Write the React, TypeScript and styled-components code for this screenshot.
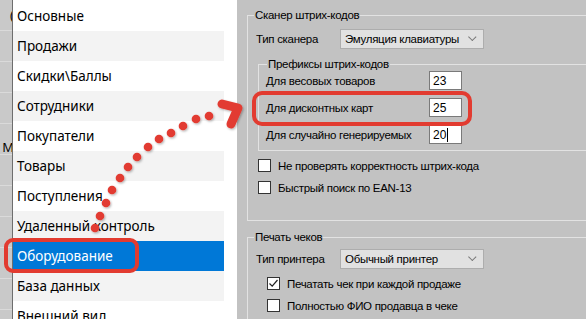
import styled, { createGlobalStyle } from "styled-components";

const GlobalStyle = createGlobalStyle`
  html, body {
    margin: 0;
    padding: 0;
    background: #ffffff;
  }
`;

const menuItems = [
  "Основные",
  "Продажи",
  "Скидки\\Баллы",
  "Сотрудники",
  "Покупатели",
  "Товары",
  "Поступления",
  "Удаленный контроль",
  "Оборудование",
  "База данных",
  "Внешний вид",
];

const stripCells = ["(", "", "", "", "M", "", "", "", "", "", ""];

const prefixes = [
  { label: "Для весовых товаров", value: "23" },
  { label: "Для дисконтных карт", value: "25" },
  { label: "Для случайно генерируемых", value: "20", caret: true },
];

const dots = [
  [95, 228], [100, 216], [106, 203], [112, 190], [120, 178], [128, 167],
  [137, 157], [148, 147], [159, 139], [171, 133], [183, 126], [196, 119], [209, 116],
];

export default function App() {
  return (
    <>
      <GlobalStyle />
      <Screen>
        <Strip>
          {stripCells.map((c, i) => (
            <StripCell key={i} $low={c === "M"}>{c}</StripCell>
          ))}
        </Strip>
        <MenuList>
          {menuItems.map((item, i) => (
            <MenuRow key={item} $alt={i % 2 === 1} $selected={item === "Оборудование"}>
              {item}
            </MenuRow>
          ))}
        </MenuList>
        <Panel>
          <Group>
            <Legend>Сканер штрих-кодов</Legend>
            <FieldRow>
              <FieldLabel>Тип сканера</FieldLabel>
              <Select>
                <span>Эмуляция клавиатуры</span>
                <Chevron />
              </Select>
            </FieldRow>
            <InnerGroup>
              <InnerLegend>Префиксы штрих-кодов</InnerLegend>
              {prefixes.map((p) => (
                <PrefixRow key={p.label}>
                  <PrefixLabel>{p.label}</PrefixLabel>
                  <TextBox>
                    {p.value}
                    {p.caret && <Caret />}
                  </TextBox>
                </PrefixRow>
              ))}
            </InnerGroup>
            <CheckRow $first>
              <CheckBox />
              <span>Не проверять корректность штрих-кода</span>
            </CheckRow>
            <CheckRow>
              <CheckBox />
              <span>Быстрый поиск по EAN-13</span>
            </CheckRow>
          </Group>
          <Group $second>
            <Legend>Печать чеков</Legend>
            <FieldRow $second>
              <FieldLabel>Тип принтера</FieldLabel>
              <Select>
                <span>Обычный принтер</span>
                <Chevron />
              </Select>
            </FieldRow>
            <CheckRow $first $indent>
              <CheckBox>
                <svg width="11" height="11" viewBox="0 0 11 11">
                  <path d="M1.5 5.5 L4.2 8.2 L9.5 2" fill="none" stroke="#222" strokeWidth="1.2" />
                </svg>
              </CheckBox>
              <span>Печатать чек при каждой продаже</span>
            </CheckRow>
            <CheckRow $indent>
              <CheckBox />
              <span>Полностью ФИО продавца в чеке</span>
            </CheckRow>
          </Group>
        </Panel>
        <Overlay width="586" height="319" viewBox="0 0 586 319">
          <defs>
            <filter id="shade" x="-50%" y="-50%" width="200%" height="200%">
              <feDropShadow dx="1" dy="1.2" stdDeviation="0.8" floodColor="#000" floodOpacity="0.3" />
            </filter>
          </defs>
          <rect x="6" y="240" width="131" height="31" rx="7" fill="none" stroke="#e23b30" strokeWidth="4" />
          <rect x="254" y="93" width="216" height="31" rx="8" fill="none" stroke="#e23b30" strokeWidth="4" />
          <g filter="url(#shade)" fill="#e23b30">
            {dots.map(([cx, cy]) => (
              <circle key={`${cx}-${cy}`} cx={cx} cy={cy} r="4.3" />
            ))}
            <path
              d="M222 104 L238 108 L231 124"
              fill="none"
              stroke="#e23b30"
              strokeWidth="9"
              strokeLinecap="round"
              strokeLinejoin="round"
            />
          </g>
        </Overlay>
      </Screen>
    </>
  );
}

const Screen = styled.div`
  position: relative;
  width: 586px;
  height: 319px;
  overflow: hidden;
  display: flex;
  font-family: "Liberation Sans", Arial, sans-serif;
  color: #000;
`;

const Strip = styled.div`
  width: 12px;
  flex-shrink: 0;
  background: #c9c9c9;
  border-right: 1px solid #6e6e6e;
  display: flex;
  flex-direction: column;
  overflow: hidden;
`;

const StripCell = styled.div<{ $low?: boolean }>`
  height: 30px;
  flex-shrink: 0;
  border-bottom: 1px solid #dadada;
  display: flex;
  align-items: ${(p) => (p.$low ? "flex-end" : "center")};
  justify-content: flex-end;
  font-family: "Noto Sans", sans-serif;
  font-size: 13px;
  line-height: 1;
  margin-right: -2px;
`;

const MenuList = styled.div`
  width: 224px;
  flex-shrink: 0;
  background: #ffffff;
  padding: 1px 13px 0 0;
  box-sizing: border-box;
  display: flex;
  flex-direction: column;
`;

const MenuRow = styled.div<{ $alt?: boolean; $selected?: boolean }>`
  height: 30px;
  flex-shrink: 0;
  display: flex;
  align-items: center;
  padding-left: 4px;
  font-family: "Noto Sans", sans-serif;
  font-size: 13.5px;
  white-space: nowrap;
  background: ${(p) => (p.$selected ? "#0078d7" : p.$alt ? "#f3f3f3" : "#ffffff")};
  color: ${(p) => (p.$selected ? "#ffffff" : "#000000")};
`;

const Panel = styled.div`
  flex: 1;
  background: #c2c2c2;
  padding-left: 10px;
  overflow: hidden;
  font-size: 11.5px;
  letter-spacing: -0.3px;
`;

const Group = styled.fieldset<{ $second?: boolean }>`
  margin: ${(p) => (p.$second ? "9px" : "8px")} -6px 0 0;
  padding: 0 0 ${(p) => (p.$second ? "20px" : "26px")} 6px;
  border: 1px solid #e2e2e2;
  min-width: 0;
`;

const Legend = styled.legend`
  padding: 0 1px;
  line-height: 14px;
`;

const FieldRow = styled.div<{ $second?: boolean }>`
  display: flex;
  align-items: center;
  margin: ${(p) => (p.$second ? "5px" : "7px")} 0 0 2px;
  height: 20px;
`;

const FieldLabel = styled.span`
  width: 84px;
`;

const Select = styled.div`
  width: 144px;
  height: 20px;
  box-sizing: border-box;
  background: #e1e1e1;
  border: 1px solid #adadad;
  display: flex;
  align-items: center;
  justify-content: space-between;
  padding: 0 7px 0 4px;
`;

const Chevron = styled.span`
  width: 5px;
  height: 5px;
  border-right: 1px solid #777;
  border-bottom: 1px solid #777;
  transform: rotate(45deg) translate(-2px, -1px);
`;

const InnerGroup = styled.fieldset`
  margin: 8px -6px 0 4px;
  padding: 0 0 6px 7px;
  border: 1px solid #e2e2e2;
  min-width: 0;
`;

const InnerLegend = styled.legend`
  padding: 0 1px;
  margin-left: 1px;
  line-height: 14px;
`;

const PrefixRow = styled.div`
  display: flex;
  align-items: center;
  height: 19px;
  & + & {
    margin-top: 8px;
  }
`;

const PrefixLabel = styled.span`
  width: 163px;
  white-space: nowrap;
`;

const TextBox = styled.div`
  width: 33px;
  height: 19px;
  box-sizing: border-box;
  background: #ffffff;
  border: 1px solid #7a7a7a;
  display: flex;
  align-items: center;
  padding-left: 3px;
  font-size: 12px;
  letter-spacing: 0;
`;

const Caret = styled.span`
  width: 1px;
  height: 14px;
  background: #000;
  margin-left: 1px;
`;

const CheckRow = styled.div<{ $first?: boolean; $indent?: boolean }>`
  display: flex;
  align-items: center;
  gap: 7px;
  margin: ${(p) => (p.$first ? "8px" : "9px")} 0 0 ${(p) => (p.$indent ? "13px" : "4px")};
  height: 13px;
  white-space: nowrap;
`;

const CheckBox = styled.span`
  width: 13px;
  height: 13px;
  box-sizing: border-box;
  border: 1px solid #333333;
  background: #ffffff;
  flex-shrink: 0;
  display: flex;
  align-items: center;
  justify-content: center;
`;

const Overlay = styled.svg`
  position: absolute;
  left: 0;
  top: 0;
  pointer-events: none;
`;
